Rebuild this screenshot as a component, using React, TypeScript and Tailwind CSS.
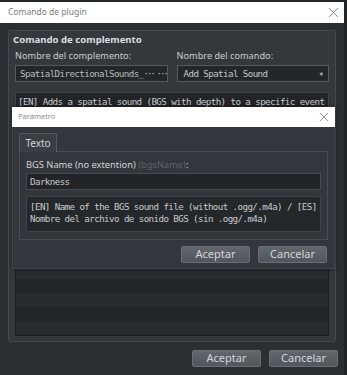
import React from 'react';

const mono = "font-['DejaVu_Sans_Mono',monospace] text-[9.2px] tracking-[-0.59px]";

const CloseX = ({ size = 11 }: { size?: number }) => (
  <svg width={size} height={size} viewBox="0 0 11 11">
    <path d="M1 1 L10 10 M10 1 L1 10" stroke="#8a8a8a" strokeWidth="1" />
  </svg>
);

const Button = ({ label }: { label: string }) => (
  <div className="w-[69px] h-[17px] flex items-center justify-center rounded-[2px] border border-[#6a6f74] bg-gradient-to-b from-[#62676c] to-[#51565b] text-[11px] text-[#d4d6d8]">
    {label}
  </div>
);

const App: React.FC = () => {
  const rows = Array.from({ length: 14 });

  return (
    <div className="relative w-[347px] h-[375px] overflow-hidden bg-[#222528] font-['Noto_Sans',sans-serif]">
      {/* main dialog */}
      <div className="w-[344px] h-[373px] mt-[2px] flex flex-col">
        <div className="h-[21px] bg-white flex items-center justify-between pl-[8px] pr-[5px]">
          <span className="text-[8.5px] text-[#7a7a7a]">Comando de plugin</span>
          <CloseX />
        </div>
        <div className="flex-1 bg-[#2c2f32] px-[8px] pt-[7px]">
          <div className="h-[312px] rounded-[3px] border border-[#46494d] bg-[#35383b] px-[6px] pt-[1px] pb-[5px] flex flex-col">
            <div className="text-[9.6px] font-bold text-[#dcdde0] leading-[16px] -ml-[2px]">
              Comando de complemento
            </div>
            <div className="grid grid-cols-2 gap-x-[9px] mt-[1px]">
              <div className="flex flex-col">
                <span className="text-[9.2px] text-[#c9cbce] leading-[14px]">Nombre del complemento:</span>
                <div className={`h-[17px] mt-[2px] border border-[#56595d] bg-[#24272a] flex items-center pl-[4px] pr-[1px] text-[#b9bcbf] whitespace-nowrap overflow-hidden ${mono}`}>
                  SpatialDirectionalSounds_<span className="tracking-[-2.2px]">···</span>
                  <span className="tracking-[-2.2px] ml-[3px]">···</span>
                </div>
              </div>
              <div className="flex flex-col">
                <span className="text-[9.2px] text-[#c9cbce] leading-[14px]">Nombre del comando:</span>
                <div className={`h-[17px] mt-[2px] border border-[#56595d] bg-[#24272a] flex items-center justify-between pl-[6px] pr-[5px] text-[#c4c6c9] ${mono}`}>
                  <span>Add Spatial Sound</span>
                  <span className="text-[6px] text-[#a9acaf] tracking-normal">▼</span>
                </div>
              </div>
            </div>
            <div className={`h-[50px] mt-[10px] rounded-[2px] border border-[#404347] bg-[#222427] px-[2px] pt-[3px] text-[#c8cacd] leading-[12px] whitespace-nowrap overflow-hidden ${mono}`}>
              [EN] Adds a spatial sound (BGS with depth) to a specific event
            </div>
            <div className="mt-[8px] flex-1 border border-[#1b1d20] bg-[#222427] overflow-hidden flex flex-col-reverse">
              {rows.map((_, i) => (
                <div key={i} className={`h-[14px] shrink-0 ${i % 2 === 0 ? 'bg-[#292c2f]' : 'bg-[#232629]'}`} />
              ))}
            </div>
          </div>
          <div className="flex justify-end gap-[8px] mt-[8px] -mr-[2px]">
            <Button label="Aceptar" />
            <Button label="Cancelar" />
          </div>
        </div>
      </div>

      {/* Parámetro modal */}
      <div className="absolute left-[12px] top-[107px] w-[323px] h-[162px] flex flex-col shadow-[0_0_4px_rgba(0,0,0,0.5)]">
        <div className="h-[20px] bg-white flex items-center justify-between pl-[6px] pr-[6px]">
          <span className="text-[7.5px] text-[#8a8a8a]">Parámetro</span>
          <CloseX size={10} />
        </div>
        <div className="flex-1 bg-[#33363a] border-x border-b border-[#404347] px-[6px] pt-[5px] flex flex-col">
          <div className="flex">
            <div className="w-[38px] h-[19px] bg-[#3a3d41] border border-b-0 border-[#56595d] rounded-t-[2px] flex items-center justify-center text-[10px] text-[#d2d4d6] relative top-[1px]">
              Texto
            </div>
          </div>
          <div className="h-[89px] border border-[#4a4d51] bg-[#33363a] px-[6px] pt-[6px] flex flex-col">
            <div className="text-[9.3px] leading-[14px] text-[#d0d2d5]">
              BGS Name (no extention) <span className="text-[#5f6367]">(bgsName)</span>:
            </div>
            <div className={`h-[17px] mt-[1px] border border-[#46494d] bg-[#222427] flex items-center px-[3px] text-[#c8cacd] ${mono}`}>
              Darkness
            </div>
            <div className={`h-[36px] mt-[6px] rounded-[2px] border border-[#404347] bg-[#25282b] px-[3px] pt-[4px] leading-[12px] text-[#c8cacd] whitespace-nowrap overflow-hidden ${mono}`}>
              <div>[EN] Name of the BGS sound file (without .ogg/.m4a) / [ES]</div>
              <div>Nombre del archivo de sonido BGS (sin .ogg/.m4a)</div>
            </div>
          </div>
          <div className="flex justify-end gap-[8px] mt-[6px] pr-[1px]">
            <Button label="Aceptar" />
            <Button label="Cancelar" />
          </div>
        </div>
      </div>
    </div>
  );
};

export default App;
